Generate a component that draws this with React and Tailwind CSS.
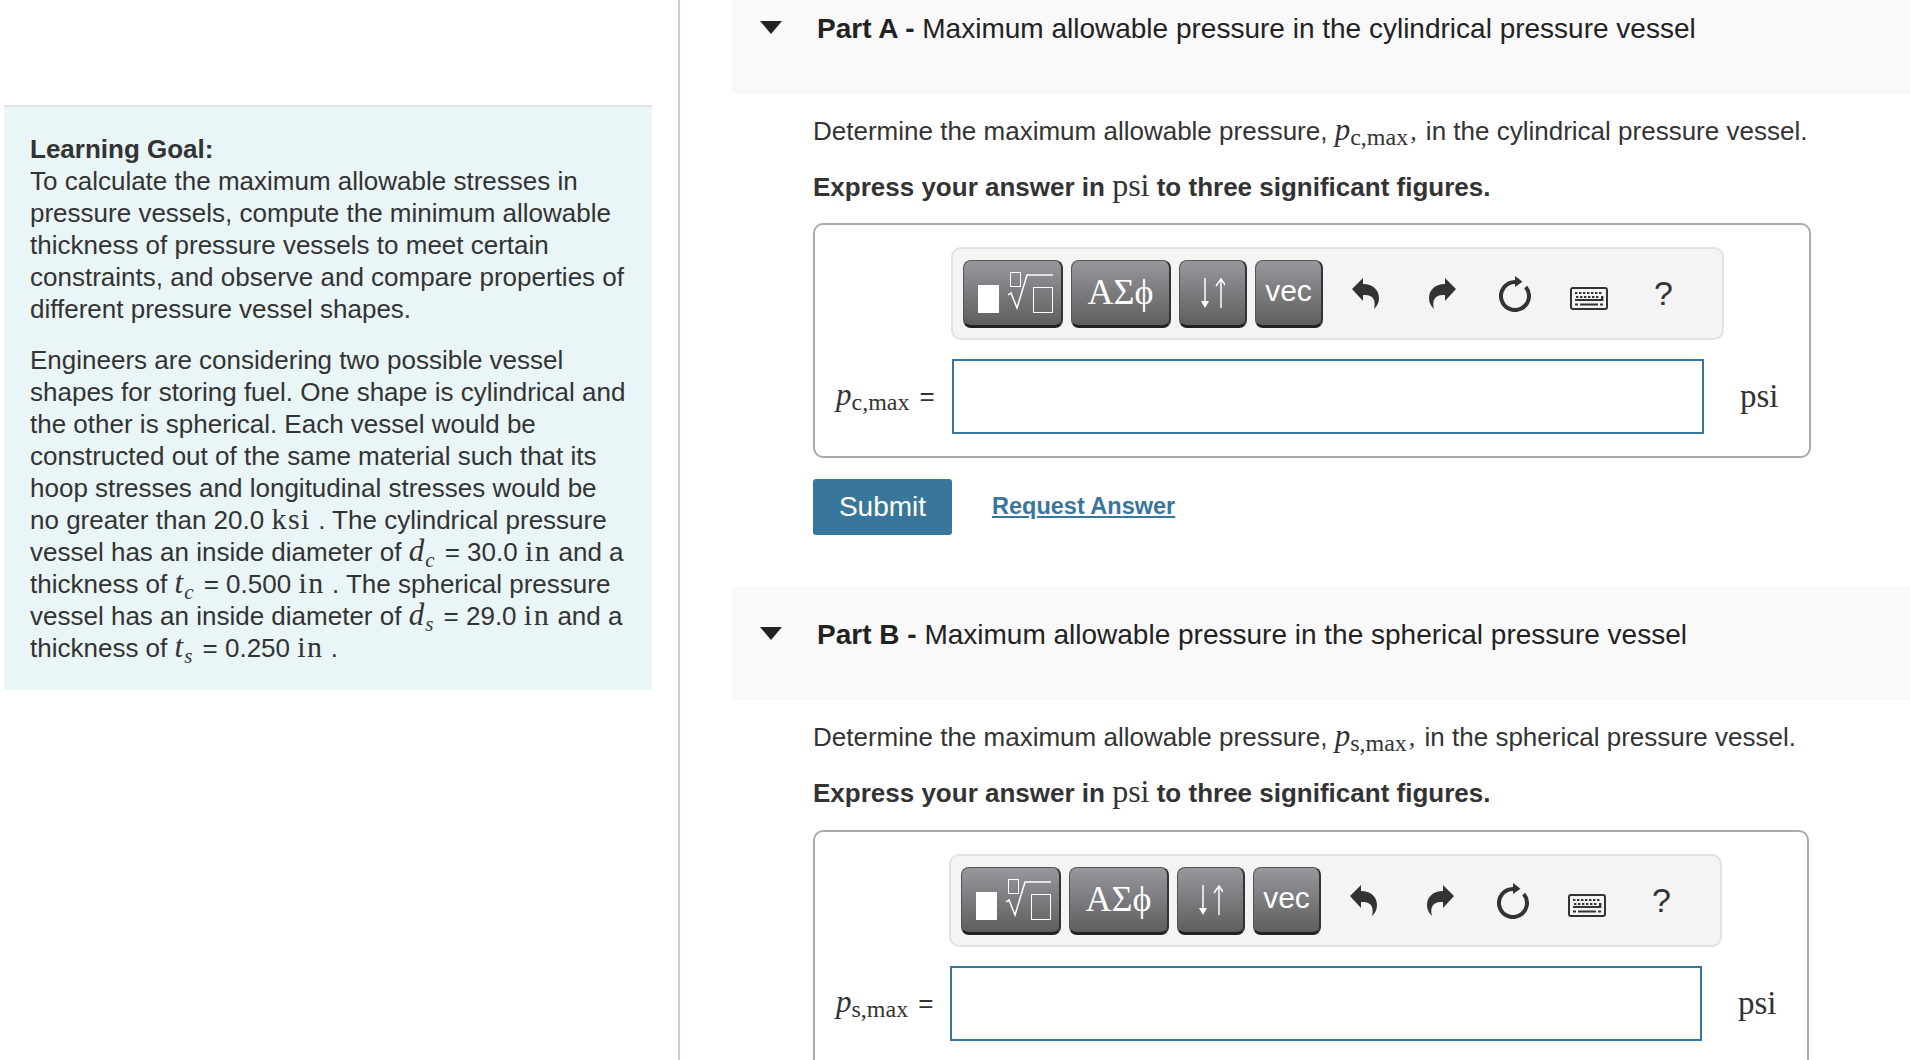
import { Fragment } from 'react'

const serif = "font-['Liberation_Serif',serif]"

// upright subscript is used for the "c,max" style labels, italic for d_c, t_s etc
function Sub({ v, s, upright }) {
  return (
    <span className={`${serif} whitespace-nowrap leading-[0]`}>
      <i className="text-[31px] leading-[0]">{v}</i>
      {upright
        ? <span className="relative top-[5px] text-[24px] leading-[0]">{s}</span>
        : <i className="relative top-[6px] text-[21px] leading-[0] pl-[1px] pr-[3px]">{s}</i>}
    </span>
  )
}

function Unit({ children }) {
  return <span className={`${serif} text-[30px] tracking-[1.5px] leading-[0]`}>{children}</span>
}

function TemplateIcon() {
  return (
    <svg width="75" height="41" viewBox="0 0 75 41" className="ml-[6px]">
      <rect x="0" y="13" width="21" height="28" fill="#fff" />
      <rect x="32.5" y="0.5" width="10" height="14" fill="none" stroke="#fff" />
      <path d="M30 23 L33 21 L39 36 L49 3 L75 3" fill="none" stroke="#fff" strokeWidth="1.5" />
      <rect x="55.5" y="15.5" width="19" height="25" fill="none" stroke="#fff" />
    </svg>
  )
}

function SwapIcon() {
  return (
    <svg width="24" height="32" viewBox="0 0 24 32" fill="none" stroke="#fff" strokeWidth="1.5">
      <path d="M4 1 V26" />
      <path d="M0 24 L4 31 L8 24 Z" fill="#fff" stroke="none" />
      <path d="M20 31 V3" />
      <path d="M15 9 L20 2 L25 9" />
    </svg>
  )
}

function UndoIcon({ flip }) {
  return (
    <svg width="27" height="31" viewBox="0 0 27 31" className={flip ? '-scale-x-100' : ''}>
      <path d="M0 11 L11 0 V6 C22 6 27 13 27 20 C27 25 25 28 22 31 C24 23 22 16 11 17 V23 Z" fill="#333" />
    </svg>
  )
}

function RefreshIcon() {
  return (
    <svg width="32" height="36" viewBox="0 0 32 36" fill="none">
      <path d="M16 6 A14 14 0 1 0 26.7 11" stroke="#333" strokeWidth="4" />
      <path d="M16 0 L23.5 5.7 L16 11 Z" fill="#333" />
    </svg>
  )
}

function KeyboardIcon() {
  const top = [5, 9, 13, 17, 21, 25, 29]
  return (
    <svg width="38" height="23" viewBox="0 0 38 23" fill="#333">
      <rect x="1" y="1" width="36" height="21" rx="2" fill="none" stroke="#333" strokeWidth="2" />
      {top.map(x => <rect key={x} x={x} y="5" width="2.4" height="2" />)}
      {top.slice(0, 6).map(x => <rect key={x} x={x + 1} y="9" width="2.4" height="2" />)}
      <rect x="31" y="9" width="2.4" height="5" />
      <rect x="5" y="12" width="28" height="2" />
      <rect x="5" y="16.5" width="3" height="2" />
      <rect x="10" y="16.5" width="18" height="2" />
      <rect x="30" y="16.5" width="3" height="2" />
    </svg>
  )
}

function TButton({ w, children }) {
  return (
    <div className={`${w} h-[68px] rounded-[8px] border-[1.5px] border-[#555] border-r-2 border-r-[#333] border-b-[3px] border-b-[#222] bg-gradient-to-b from-[#98979d] to-[#5f5f60] flex items-center justify-center text-white`}>
      {children}
    </div>
  )
}

function Toolbar() {
  return (
    <div className="w-[773px] h-[93px] rounded-[10px] border-2 border-[#e2e2e2] bg-[#f4f4f4] flex items-center pl-[10px]">
      <div className="flex gap-[8px]">
        <TButton w="w-[100px]"><TemplateIcon /></TButton>
        <TButton w="w-[100px]"><span className={`${serif} text-[36px] leading-none -mt-[1px]`}>ΑΣϕ</span></TButton>
        <TButton w="w-[68px]"><SwapIcon /></TButton>
        <TButton w="w-[68px]"><span className="text-[30px] leading-none -mt-[4px]">vec</span></TButton>
      </div>
      <div className="flex items-center ml-[29px]"><UndoIcon /></div>
      <div className="flex items-center ml-[50px]"><UndoIcon flip /></div>
      <div className="flex items-center ml-[43px]"><RefreshIcon /></div>
      <div className="flex items-center ml-[39px] mt-[9px]"><KeyboardIcon /></div>
      <div className="ml-[46px] text-[34px] leading-none text-[#333] -mt-[1px]">?</div>
    </div>
  )
}

function AnswerBox({ v, s, w, inner, clipped }) {
  return (
    <div className={`${w} rounded-[10px] border-2 border-[#ababab] ${clipped ? 'h-[300px]' : 'h-[235px]'} pt-[22px]`}>
      <div className={inner.toolbar}><Toolbar /></div>
      <div className={`flex items-center mt-[19px] ${inner.row}`}>
        <div className={`${inner.label} text-[#333] whitespace-nowrap flex items-baseline -mt-[1px]`}>
          <Sub v={v} s={`${s},max`} upright />
          <span className="text-[26px] ml-[10px]">=</span>
        </div>
        <div className={`${inner.input} h-[75px] border-2 border-[#38779b] bg-white`} />
        <div className={`${serif} text-[33px] text-[#333] ml-[36px]`}>psi</div>
      </div>
    </div>
  )
}

function PartHeader({ letter, title, h }) {
  return (
    <div className={`${h} bg-[#f9f9f9] flex items-start`}>
      <svg width="22" height="13" viewBox="0 0 22 13" className="ml-[28px] mt-[21px] shrink-0" fill="#222">
        <path d="M0 0 H22 L11 13 Z" />
      </svg>
      <div className="ml-[35px] mt-[12px] text-[28px] leading-[34px] text-[#222] whitespace-nowrap">
        <b>Part {letter} -</b> {title}
      </div>
    </div>
  )
}

function Intro({ v, s, shape }) {
  return (
    <Fragment>
      <p className="text-[26px] leading-[32px] text-[#333] whitespace-nowrap">
        Determine the maximum allowable pressure, <Sub v={v} s={`${s},max`} upright /><span className={`${serif} pl-[2px] pr-[2px]`}>,</span> in the {shape} pressure vessel.
      </p>
      <p className="mt-[23px] text-[26px] leading-[32px] font-bold text-[#333] whitespace-nowrap">
        Express your answer in <span className={`${serif} font-normal text-[32px] leading-[0]`}>psi</span> to three significant figures.
      </p>
    </Fragment>
  )
}

export default function App() {
  return (
    <div className="h-[1060px] overflow-hidden bg-white flex font-['Liberation_Sans',sans-serif]">
      <div className="w-[680px] shrink-0 border-r-2 border-[#c3cfdd] pl-[4px] pr-[26px] pt-[105px]">
        <div className="h-[585px] bg-[#e9f5f6] border-t-2 border-[#dfe3e4] pl-[26px] pr-[24px] pt-[26px] text-[26px] leading-[32px] text-[#333]">
          <p><b>Learning Goal:</b><br />To calculate the maximum allowable stresses in pressure vessels, compute the minimum allowable thickness of pressure vessels to meet certain constraints, and observe and compare properties of different pressure vessel shapes.</p>
          <p className="mt-[19px]">
            Engineers are considering two possible vessel shapes for storing fuel. One shape is cylindrical and the other is spherical. Each vessel would be constructed out of the same material such that its hoop stresses and longitudinal stresses would be no greater than 20.0 <Unit>ksi</Unit> . The cylindrical pressure vessel has an inside diameter of <Sub v="d" s="c" /> = 30.0 <Unit>in</Unit> and a thickness of <Sub v="t" s="c" /> = 0.500 <Unit>in</Unit> . The spherical pressure vessel has an inside diameter of <Sub v="d" s="s" /> = 29.0 <Unit>in</Unit> and a thickness of <Sub v="t" s="s" /> = 0.250 <Unit>in</Unit> .
          </p>
        </div>
      </div>
      <div className="flex-1 pl-[52px]">
        <PartHeader letter="A" title="Maximum allowable pressure in the cylindrical pressure vessel" h="h-[94px]" />
        <div className="pl-[81px] pt-[21px]">
          <Intro v="p" s="c" shape="cylindrical" />
          <div className="mt-[20px]">
            <AnswerBox v="p" s="c" w="w-[998px]" inner={{ toolbar: 'ml-[136px]', row: 'pl-[21px]', label: 'w-[116px]', input: 'w-[752px]' }} />
          </div>
          <div className="mt-[21px] flex items-center">
            <div className="w-[139px] h-[56px] rounded-[3px] bg-[#38779b] text-white text-[28px] flex items-center justify-center">Submit</div>
            <a className="ml-[40px] text-[23.5px] font-bold text-[#38779b] underline">Request Answer</a>
          </div>
        </div>
        <div className="mt-[52px]">
          <PartHeader letter="B" title="Maximum allowable pressure in the spherical pressure vessel" h="h-[113px] pt-[19px]" />
        </div>
        <div className="pl-[81px] pt-[21px]">
          <Intro v="p" s="s" shape="spherical" />
          <div className="mt-[21px]">
            <AnswerBox v="p" s="s" w="w-[996px]" clipped inner={{ toolbar: 'ml-[134px]', row: 'pl-[21px]', label: 'w-[114px]', input: 'w-[752px]' }} />
          </div>
        </div>
      </div>
    </div>
  )
}
